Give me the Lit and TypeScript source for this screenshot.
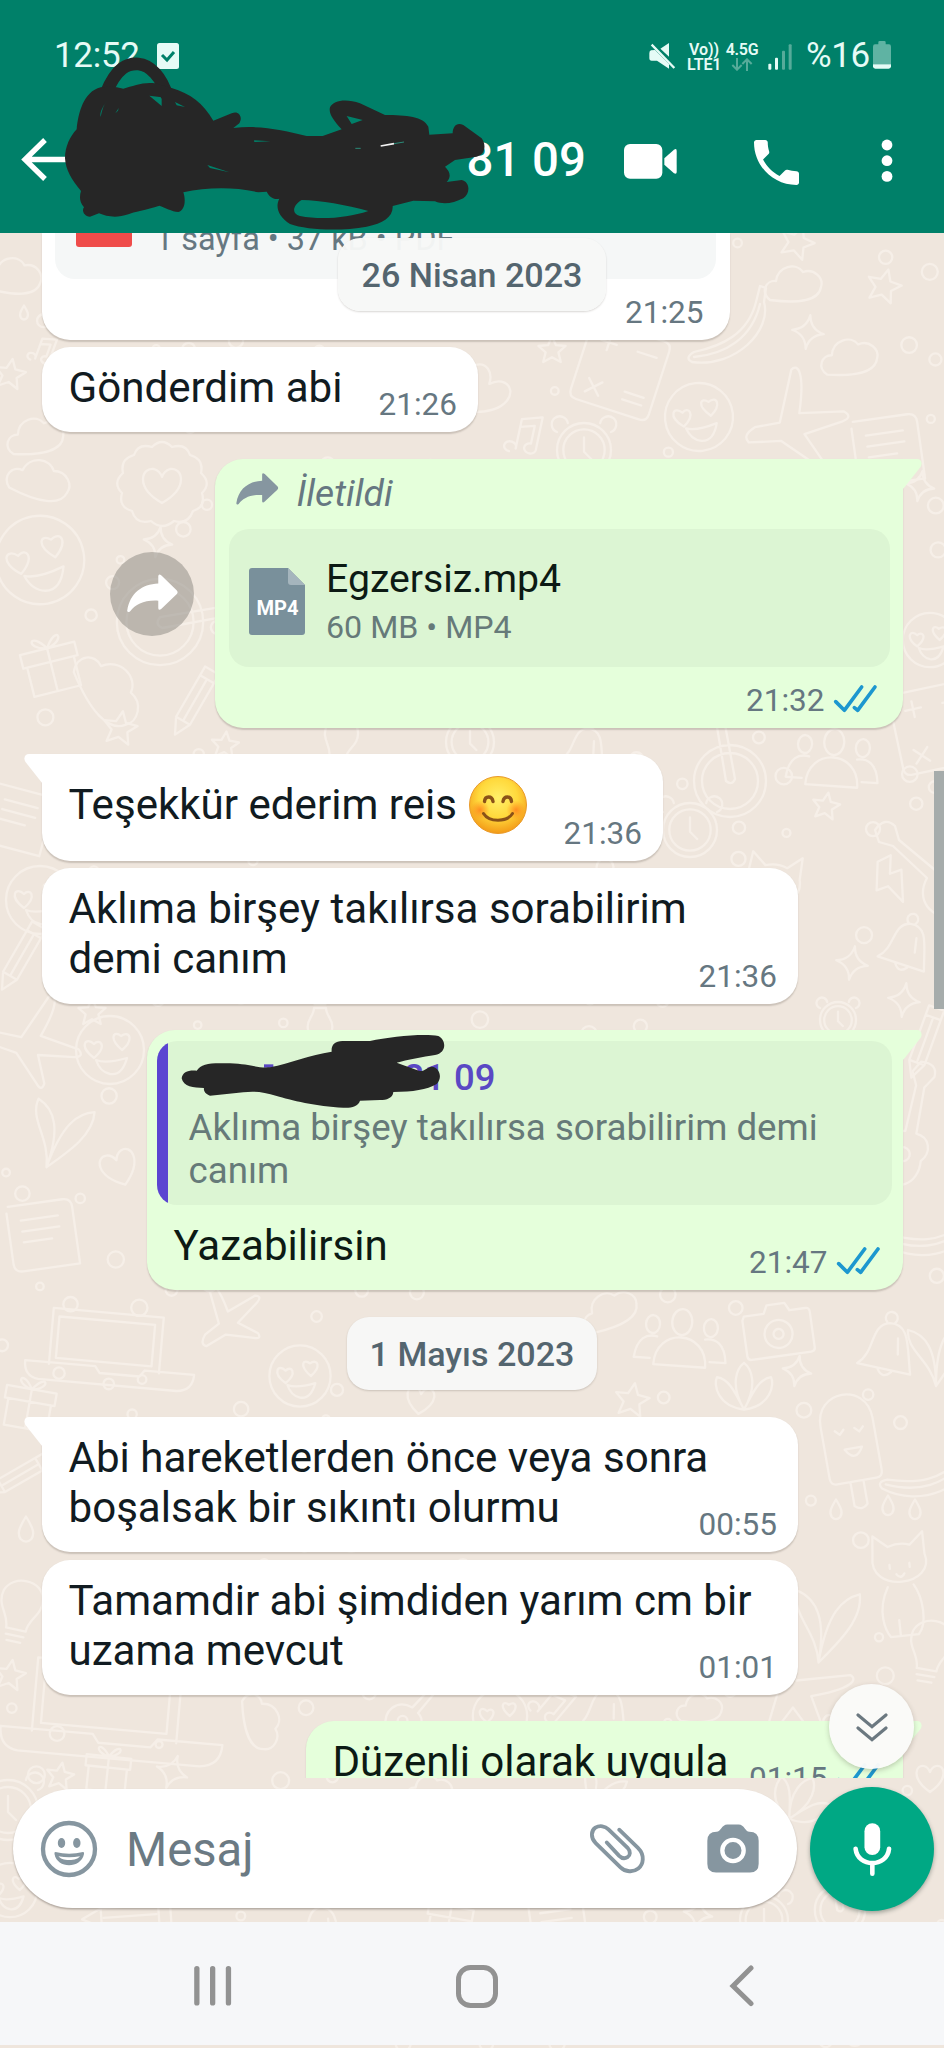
import { LitElement, html, svg, css, nothing } from "lit";
import { customElement, property } from "lit/decorators.js";

/* ---------- wallpaper ---------- */

const DOODLES: Record<string, string> = {
  star: "M0 -17L5 -6L17 -5L8 3L11 15L0 9L-11 15L-8 3L-17 -5L-5 -6Z",
  sparkle: "M0 -17Q2 -3 16 0Q2 3 0 17Q-2 3 -16 0Q-2 -3 0 -17Z",
  cloud: "M-24 16C-34 8 -28 -4 -18 -3C-16 -18 2 -22 9 -12C20 -16 30 -6 27 3C25 16 6 20 -24 16Z",
  heart: "M0 12C-20 -2 -14 -16 -6 -14Q-2 -13 0 -8Q2 -13 6 -14C14 -16 20 -2 0 12Z",
  badge: "M-10 -40Q0 -50 10 -40Q24 -44 28 -32Q42 -28 39 -14Q50 -4 40 6Q44 20 31 24Q26 38 12 34Q0 44 -11 34Q-26 38 -30 24Q-44 20 -40 6Q-50 -4 -39 -14Q-42 -28 -28 -32Q-24 -44 -10 -40ZM0 16C-28 0 -20 -20 -8 -18Q-2 -16 0 -10Q2 -16 8 -18C20 -20 28 0 0 16Z",
  smile: "M34 0A34 34 0 1 1 -34 0A34 34 0 1 1 34 0ZM-14 10Q-4 14 17 8Q12 26 0 24Q-10 22 -14 10ZM-16 8C-32 -4 -24 -14 -16 -6C-10 -12 -2 -4 -16 8ZM12 0C-2 -12 4 -20 11 -14C20 -20 24 -10 12 0Z",
  bell: "M-27 22C-10 8 -20 -18 0 -22C20 -24 20 -2 27 26ZM-3 -23A6 6 0 1 1 5 -23M-6 25Q0 35 8 26M10 -8L12 8",
  camera: "M-32 -18L-12 -18L-8 -26L10 -26L14 -18L30 -18Q34 -18 34 -14V22Q34 26 30 26H-30Q-34 26 -34 22V-14ZM14 4A14 14 0 1 1 -14 4A14 14 0 1 1 14 4ZM5 4A5 5 0 1 1 -5 4A5 5 0 1 1 5 4Z",
  plane: "M-6 -52C0 -60 8 -50 8 -10L52 -18Q62 -14 52 -8L16 10L38 34Q40 44 30 38L-6 20L-38 26Q-46 20 -34 10L-10 2Z",
  banana: "M34 -44L40 -42L38 -28C46 0 10 38 -34 32Q-42 28 -32 22C-4 16 22 4 30 -28ZM-32 27C0 24 26 8 34 -26",
  calc: "M-36 -44L30 -44Q38 -44 38 -36V30Q38 38 30 38H-36Q-44 38 -44 30V-36Q-44 -44 -36 -44ZM-30 -26H-14M-22 -34V-18M8 -26H28M-30 14L-16 28M-16 14L-30 28M8 16H28M8 24H28",
  people: "M-26 26C-26 -12 26 -12 26 26ZM10 -18A10 13 0 1 1 -10 -18A10 13 0 1 1 10 -18ZM-30 20H-46C-44 0 -34 -4 -24 -2M30 20H46C44 0 34 -4 24 -2M-22 -14A7 9 0 1 1 -36 -14A7 9 0 1 1 -22 -14ZM36 -14A7 9 0 1 1 22 -14A7 9 0 1 1 36 -14Z",
  laptop: "M-74 -40H64V30M-66 -30H54V22H-66ZM-74 -40V30M-104 28H-16L-10 36H40L46 28H108Q108 48 88 50H-86Q-104 48 -104 28Z",
  cat: "M-24 -16L-22 -36L-8 -24Q4 -28 14 -24L28 -36L28 -14C38 20 -32 22 -24 -16ZM-12 16C-26 40 -18 60 -14 66H14C24 56 22 30 14 16M-8 -6V-2M12 -6V-2M-2 4Q2 10 6 4M-4 66V50",
  note: "M-12 16A6 5 0 1 1 -6 12V-18L14 -24V8A6 5 0 1 1 8 4V-14L-6 -10",
  bolt: "M-8 -20L6 -24L2 -6L14 -8L10 24L-2 6L-14 8Z",
  flower: "M0 24C-30 20 -34 -4 -30 -12C-18 -10 -12 0 0 24C-16 -4 -8 -22 0 -28C8 -22 16 -4 0 24C12 0 18 -10 30 -12C34 -4 30 20 0 24Z",
  drop: "M0 -15C8 -2 10 4 6 10Q0 16 -6 10C-10 4 -8 -2 0 -15Z",
  bulb: "M-10 20C-10 6 -24 0 -20 -16C-14 -34 16 -34 20 -16C24 0 10 6 10 20ZM-9 26H9M-7 32H7",
  clock: "M30 0A30 30 0 1 1 -30 0A30 30 0 1 1 30 0ZM23 0A23 23 0 1 1 -23 0A23 23 0 1 1 23 0ZM0 -14V2L8 10M-30 -20A9 9 0 1 1 -18 -30M18 -30A9 9 0 1 1 30 -20",
  pencil: "M-8 -34H8V24L0 40L-8 24ZM-8 -24H8M-8 24H8M0 -22V22",
  popsicle: "M-24 30V-18C-24 -52 24 -52 24 -18V30Q24 36 18 36H-18Q-24 36 -24 30ZM-6 36V58Q0 64 6 58V36M-12 -12L-8 -8L-4 -12M6 -12L10 -8L14 -12M-6 6Q2 20 10 6Z",
  gift: "M-28 -12H28V2H-28ZM-24 2V32H24V2M0 -12V32M0 -12C-22 -16 -14 -34 0 -12C14 -34 22 -16 0 -12Z",
  book: "M-30 -30H20Q28 -30 28 -22V30H-24Q-32 30 -32 22V-24M-20 -16H14M-20 -6H14M-20 4H6",
  guitar: "M-50 -30Q-40 -44 -30 -34L-26 -20L10 10C20 0 34 6 36 20C56 34 50 60 30 56C6 60 -10 40 2 18L-32 -14L-46 -18ZM28 32A7 7 0 1 1 14 32A7 7 0 1 1 28 32Z",
  wheel: "M36 0A36 36 0 1 1 -36 0A36 36 0 1 1 36 0ZM28 0A28 28 0 1 1 -28 0A28 28 0 1 1 28 0ZM-4 0L-14 -60L-6 -62L5 -2Q2 5 -4 0Z",
  leaf: "M0 36C-6 10 -30 0 -28 -20C-10 -16 0 0 0 36C0 -6 10 -20 24 -26C30 -6 14 16 0 36Z",
};

type Placed = [kind: string, x: number, y: number, scale: number, turn: number];

const PLACED: Placed[] = [
  ["cloud", 14, 276, 1, 8], ["drop", 24, 313, 0.5, 0], ["star", 10, 374, 0.9, 10], ["note", 42, 352, 0.7, 20],
  ["cloud", 36, 436, 1, -5], ["star", 797, 242, 1, 20], ["cloud", 794, 284, 1, 0], ["star", 884, 286, 1, 15],
  ["banana", 726, 330, 1, 0], ["sparkle", 808, 332, 1, 8], ["cloud", 850, 357, 1, -4], ["calc", 622, 374, 1, 18],
  ["smile", 699, 417, 1, -6], ["plane", 790, 422, 1, 8], ["clock", 584, 450, 0.9, 0], ["note", 524, 438, 1, 12],
  ["heart", 480, 395, 1.8, 40], ["book", 890, 450, 1.1, -8], ["sparkle", 920, 486, 0.9, 10], ["star", 552, 350, 0.8, 0],
  ["badge", 162, 487, 1, 0], ["star", 120, 728, 1, 10], ["sparkle", 158, 542, 0.9, 10], ["wheel", 160, 622, 1.2, 90],
  ["cloud", 40, 480, 1.1, 20], ["smile", 40, 560, 1.3, -10], ["gift", 50, 660, 1, -14], ["cloud", 110, 690, 1.4, 60],
  ["pencil", 195, 700, 1, 30], ["star", 225, 745, 0.8, 6], ["bulb", 340, 742, 0.8, 10], ["clock", 470, 742, 0.8, 0],
  ["bell", 585, 746, 0.8, 10], ["wheel", 730, 781, 1, 0], ["people", 833, 760, 1, 4], ["calc", 940, 730, 1, -12],
  ["smile", 930, 640, 0.8, 0], ["star", 826, 806, 0.8, 10], ["guitar", 925, 860, 1, 0], ["bolt", 889, 880, 1, -10],
  ["bell", 906, 943, 0.9, 14], ["sparkle", 852, 963, 1, 10], ["sparkle", 904, 1000, 1, 8], ["cat", 770, 890, 1, 8],
  ["clock", 690, 830, 0.9, 0], ["book", 20, 820, 1, 15], ["smile", 40, 900, 1, 0], ["pencil", 22, 955, 1, 30],
  ["star", 92, 1012, 0.8, 0], ["plane", 30, 1040, 0.9, 30], ["smile", 110, 1050, 1, 0], ["bulb", 320, 1020, 0.6, 180],
  ["clock", 838, 1020, 0.6, 0], ["book", 45, 1235, 1.1, -8], ["leaf", 60, 1130, 1.1, 20], ["heart", 120, 1170, 1.3, -20],
  ["guitar", 920, 1120, 1, 60], ["pencil", 925, 1040, 1, 20], ["banana", 925, 1230, 1, 30], ["laptop", 110, 1345, 0.8, 5],
  ["people", 681, 1340, 1, 4], ["camera", 778, 1330, 1, -8], ["bell", 887, 1345, 1, 8], ["sparkle", 797, 1371, 0.9, 10],
  ["flower", 744, 1388, 0.9, 0], ["star", 632, 1400, 1, 10], ["smile", 300, 1376, 0.9, 0], ["plane", 225, 1320, 0.7, -20],
  ["leaf", 936, 1350, 1, 0], ["gift", 30, 1400, 0.9, 10], ["cloud", 610, 1310, 1, -20], ["heart", 420, 1402, 1, 8],
  ["popsicle", 850, 1442, 1.1, -10], ["banana", 925, 1470, 1, 20], ["cat", 898, 1570, 1, -6], ["leaf", 826, 1620, 1.2, 10],
  ["drop", 836, 1510, 0.7, 0], ["drop", 888, 1506, 0.7, 0], ["drop", 915, 1510, 0.7, 0], ["drop", 26, 1530, 0.9, 0],
  ["pencil", 20, 1475, 0.9, 60], ["star", 10, 1675, 0.9, 10], ["bulb", 20, 1610, 1, 12], ["laptop", 112, 1706, 1.05, 5],
  ["star", 60, 1776, 0.8, 10], ["gift", 108, 1766, 0.8, 6], ["sparkle", 172, 1772, 1, 20], ["cloud", 262, 1722, 1, 80],
  ["guitar", 425, 1706, 0.7, 90], ["smile", 500, 1716, 0.8, 0], ["note", 550, 1706, 1, 40], ["bell", 604, 1710, 0.9, 8],
  ["cloud", 700, 1708, 0.8, 0], ["plane", 800, 1690, 1, 80], ["bulb", 930, 1650, 1, 10], ["clock", 8, 1810, 1, 0],
  ["cloud", 430, 1790, 0.8, 0], ["leaf", 600, 1790, 0.8, 30], ["flower", 800, 1800, 0.9, 30], ["heart", 930, 1780, 1, 0],
  ["smile", 10, 1890, 0.8, 0], ["pencil", 130, 1916, 1.2, 86], ["bell", 320, 1925, 0.8, 0], ["gift", 450, 1916, 0.8, 10],
  ["book", 560, 1925, 0.9, -8], ["sparkle", 698, 1914, 0.9, 10], ["clock", 764, 1920, 0.8, 0], ["wheel", 840, 1910, 0.7, 0],
];

function sprinkle() {
  let seed = 41;
  const next = () => (seed = (seed * 16807) % 2147483647) / 2147483647;
  const dots: [number, number, number][] = [];
  for (let i = 0; i < 1500 && dots.length < 430; i++) {
    const x = next() * 944, y = 234 + next() * 1814, r = 3.5 + next() * 5;
    const busy =
      PLACED.some(([k, px, py, s]) => Math.hypot(px - x, py - y) < ("star sparkle drop bolt heart".includes(k) ? 25 : 42) * s) ||
      dots.some(([dx, dy]) => Math.hypot(dx - x, dy - y) < 24);
    if (!busy) dots.push([x, y, r]);
  }
  return dots;
}
const DOTS = sprinkle();

@customElement("chat-wallpaper")
class ChatWallpaper extends LitElement {
  static styles = css`
    :host { display: block; }
    svg { display: block; }
  `;
  render() {
    return html`<svg width="944" height="2048" viewBox="0 0 944 2048" fill="none" stroke="#f6efe8"
      stroke-width="2.300" stroke-linejoin="round" stroke-linecap="round">
      ${PLACED.map(([k, x, y, s, a]) => svg`<path vector-effect="non-scaling-stroke" d=${DOODLES[k]} transform="translate(${x} ${y}) rotate(${a}) scale(${s})"/>`)}
      ${DOTS.map(([x, y, r]) => svg`<circle cx=${x} cy=${y} r=${r}/>`)}
    </svg>`;
  }
}

/* ---------- icons ---------- */

const ticks = html`<svg class="ticks" width="45" height="29.3" viewBox="0 0 135 88" fill="none" stroke="#1d97cf"
  stroke-width="11" stroke-linecap="round" stroke-linejoin="round"><path d="M8 53L34 79L86 9M64 71L74 79L126 9"/></svg>`;

const forwardPath = "M438 164C445 120 475 98 516 96V77Q517 70 524 76L562 113Q567 118 562 123L524 159Q517 165 516 158V139C480 137 460 148 445 166Q439 170 438 164Z";

const smiling = html`<svg class="smiling" width="58" height="58" viewBox="0 0 58 58">
  <defs>
    <radialGradient id="face" cx=".5" cy=".38" r=".62">
      <stop offset="0" stop-color="#fff06a"/><stop offset=".55" stop-color="#ffd93c"/><stop offset="1" stop-color="#f39a17"/>
    </radialGradient>
    <radialGradient id="blush"><stop offset="0" stop-color="#ff7d1c" stop-opacity=".8"/><stop offset="1" stop-color="#ff8a1c" stop-opacity="0"/></radialGradient>
  </defs>
  <circle cx="29" cy="29" r="28.5" fill="url(#face)" stroke="#e99a2a" stroke-width="1"/>
  <circle cx="11" cy="34" r="9.5" fill="url(#blush)"/><circle cx="47" cy="34" r="9.5" fill="url(#blush)"/>
  <g fill="none" stroke="#8a5218" stroke-linecap="round">
    <path stroke-width="3.4" d="M15.5 25.5C16 19.5 23 19.5 24 25.5M34 25.5C35 19.5 42 19.5 42.500 25.5"/>
    <path stroke-width="3" d="M14.500 37.500C20 46.500 38 46.500 43.500 37.500"/>
  </g></svg>`;

/* ---------- message bubble ---------- */

@customElement("chat-bubble")
class ChatBubble extends LitElement {
  @property({ reflect: true }) side: "in" | "out" = "in";
  @property() time = "";
  @property({ type: Boolean, reflect: true }) tail = false;
  static styles = css`
    :host { display: flex; flex: none; flex-direction: column; position: relative; box-sizing: border-box;
      border-radius: 28px; background: #fff; color: #111b21; box-shadow: 0 1.5px 1.5px rgba(60, 50, 40, .2); }
    :host([side="in"]) { margin-left: 42px; align-self: flex-start; }
    :host([side="out"]) { margin-right: 41px; align-self: flex-end; background: #e5ffdb; color: #0c1a14; }
    :host([tail][side="in"]) { border-top-left-radius: 0; }
    :host([tail][side="out"]) { border-top-right-radius: 0; }
    .tail { position: absolute; top: 0; }
    .tail.in { left: -18px; }
    .tail.out { right: -18.5px; }
    .row { display: flex; flex: 1; padding: 0 21px 8px 26.5px; }
    .row.out { padding-right: var(--meta-inset, 22px); }
    .text { flex: 1; min-width: 0; padding: 16px 0 11px; font-size: 42.1px; line-height: 50px; white-space: nowrap; }
    .meta { align-self: flex-end; display: flex; align-items: flex-end; gap: 8.5px; font-size: 31.5px; line-height: 38px; color: #667781; }
    .ticks { margin-bottom: 7px; }
  `;
  render() {
    const out = this.side === "out";
    return html`
      ${this.tail
        ? html`<svg class="tail ${this.side}" width="19" height="30" viewBox="0 0 19 30">
            <path fill=${out ? "#e5ffdb" : "#fff"} transform=${out ? "translate(19 0) scale(-1 1)" : ""}
              d="M19 0H5C1 0 -1 4 1.500 8L18.500 29.500H19Z"/></svg>`
        : nothing}
      <slot name="top"></slot>
      <div class="row ${this.side}">
        <div class="text"><slot></slot></div>
        <div class="meta">${this.time}${out ? ticks : nothing}</div>
      </div>`;
  }
}

/* ---------- screen ---------- */

@customElement("app-root")
class AppRoot extends LitElement {
  static styles = css`
    :host { display: flex; flex-direction: column; position: relative; width: 944px; height: 2048px; overflow: hidden;
      background: #efe6dd; font-family: Roboto, "Liberation Sans", sans-serif; }
    svg { display: block; flex: none; }
    chat-wallpaper { position: absolute; left: 0; top: 0; }
    header { position: relative; z-index: 3; height: 233px; flex: none; background: #008069; color: #fff; }
    .scribble { position: absolute; left: 0; top: 0; }
    .status { display: flex; align-items: flex-start; height: 94px; box-sizing: border-box; padding: 35px 53px 0 54px; color: #e6fbf6; }
    .clock { font-size: 35px; line-height: 42px; width: 103px; letter-spacing: -.3px; }
    .status svg.task { margin-top: 8px; }
    .status .mute { margin: 7px 0 0 auto; }
    .net { margin-left: 11px; font-size: 16px; line-height: 15px; font-weight: 600; padding-top: 6.5px; width: 34px; text-align: center; letter-spacing: -.1px; white-space: nowrap; }
    .gen { margin-left: 4px; width: 34px; letter-spacing: -.3px; }
    .gen svg { margin: 1.5px auto 0; }
    .bars { margin: 8px 13px 0 9px; }
    .percent { font-size: 35px; line-height: 42px; width: 63px; white-space: nowrap; letter-spacing: -.4px; }
    .battery { margin: 6px 0 0 4px; }
    .appbar { display: flex; align-items: center; height: 132px; padding: 0 51px 0 20px; }
    .title { flex: 1; padding-left: 400.500px; font-size: 47.3px; font-weight: 500; white-space: nowrap; line-height: 56px; }
    .phone { margin: 4px 82px 0 77px; }
    .video { margin-top: 3px; }
    .dots { margin-top: 1px; }

    main { position: relative; flex: none; height: 1545px; overflow: hidden; display: flex; flex-direction: column; }
    .g7 { margin-top: 7px; } .g8 { margin-top: 8px; } .g26 { margin-top: 26px; } .g27 { margin-top: 27px; }
    .w436 { width: 436px; } .w688 { width: 688px; } .w621 { width: 621px; height: 107px; } .w756 { width: 756px; }
    .w597 { width: 597px; } .b2 { height: 85px; } .b5 { height: 136px; }
    .smiling { display: inline-block; vertical-align: -15px; margin-left: 12px; }
    .smile-line { display: block; height: 61px; line-height: 72px; margin-top: -1px; }

    .first { height: 107px; margin-left: 42px; width: 688px; background: #fff; border-radius: 0 0 28px 28px; box-sizing: border-box;
      box-shadow: 0 1.5px 1.5px rgba(60, 50, 40, .2); padding: 0 20px 0 13px; flex: none; }
    .firstdoc { height: 46px; width: 661px; box-sizing: border-box; background: #f5f7f7; border-radius: 0 0 20px 20px;
      display: flex; align-items: flex-end; padding: 0 0 21px 21px; gap: 23px; }
    .red { width: 56px; height: 14px; background: #ef4c4a; border-radius: 0 0 3px 3px; align-self: flex-start; }
    .sub { font-size: 32.4px; line-height: 38px; color: #667781; white-space: nowrap; }
    .firsttime { text-align: right; font-size: 31.5px; line-height: 38px; color: #667781; margin-top: 15px; padding-right: 6.500px; }

    .date { display: flex; align-items: center; justify-content: center; box-sizing: border-box; height: 73px; width: 250px; align-self: center;
      border-radius: 22px; background: #f7f7f6; color: #54656f; font-weight: 500; font-size: 34.1px; white-space: nowrap;
      box-shadow: 0 1px 2px rgba(60, 50, 40, .2); flex: none; }
    .date.float { position: absolute; left: 338px; top: 5px; width: 268px; background: rgba(247, 248, 247, .96); }

    .out-row { display: flex; flex: none; align-items: center; justify-content: flex-end; }
    .share { width: 84px; height: 84px; border-radius: 50%; background: rgba(148, 145, 138, .56); display: flex; align-items: center; justify-content: center; margin: 0 21px 0 0; }
    .filemsg { height: 269px; --meta-inset: 25px; }
    .fwd { display: flex; gap: 17.500px; padding: 13px 0 0 21px; height: 57px; font-size: 37.2px; line-height: 42px; font-style: italic; color: #667781; }
    .file { margin: 0 13px 0 14px; height: 138px; background: #dcf5d3; border-radius: 20px; display: flex; gap: 21px; box-sizing: border-box; padding: 26px 0 0 20px; }
    .file svg { margin-top: 13px; }
    .name { font-size: 39.2px; line-height: 48px; margin-bottom: 4px; }
    .size { font-size: 32.2px; line-height: 40px; color: #667a79; }

    .replymsg { width: 756px; }
    .quote { margin: 11px 11px 0 10px; height: 164px; box-sizing: border-box; border-radius: 20px; overflow: hidden;
      background: linear-gradient(90deg, #5b45d1 11px, #dcf5d3 11px); padding: 15px 0 0 31.500px; color: #667a79; font-size: 36.700px; line-height: 43px; white-space: nowrap; }
    .author { color: #5a48c4; font-weight: 500; font-size: 36.500px; line-height: 44px; margin-bottom: 6px; padding-left: 215px; }
    .hide-name { position: absolute; left: -17px; top: 0; z-index: 1; }

    .scroll { position: absolute; right: 0; top: 538px; width: 10px; height: 238px; background: #a6acab; }
    .jump { position: absolute; left: 829px; top: 1451px; width: 85px; height: 85px; border-radius: 50%; background: rgba(250, 250, 249, .97); display: flex; align-items: center; justify-content: center; box-shadow: 0 2px 5px rgba(60, 50, 40, .25); }

    .compose { position: relative; flex: none; height: 144px; box-sizing: border-box; padding: 9px 10px 0 13px; display: flex; gap: 13px; align-items: flex-start; }
    .field { margin-top: 2px; width: 784px; height: 119px; box-sizing: border-box; border-radius: 60px; background: #fff; display: flex; align-items: center; padding: 0 37px 0 27px; box-shadow: 0 1.5px 2px rgba(60, 50, 40, .35); }
    .hint { flex: 1; padding: 2px 0 0 28px; font-size: 47.200px; line-height: 56px; color: #6b7a83; }
    .clip { margin-right: 60px; }
    .mic { width: 124px; height: 124px; border-radius: 50%; background: #00a884; display: flex; align-items: center; justify-content: center; box-shadow: 0 2px 4px rgba(40, 60, 50, .4); }
    nav { position: relative; flex: none; height: 123px; background: #f6f7f9; display: flex; align-items: center; padding: 5px 0 0 193px; box-sizing: border-box; }
    nav .home { margin: 0 231px 0 223px; }
  `;

  private header() {
    return html`<header>
      <div class="status">
        <span class="clock">12:52</span>
        <svg class="task" width="22" height="26" viewBox="0 0 22 26"><rect width="22" height="26" rx="2.500" fill="#e6fbf6"/><path d="M5 12L10 17L17 9" fill="none" stroke="#008069" stroke-width="3"/></svg>
        <svg class="mute" width="27" height="28" viewBox="0 0 81 84" fill="#e6fbf6"><path d="M60 3V44L34 20ZM6 25Q1 27 1 34V48Q1 56 8 56H24L60 80V66L18 24Z"/><path d="M8 8L76 78" stroke="#e6fbf6" stroke-width="7" fill="none"/><path d="M14 4L62 52" stroke="#008069" stroke-width="4" fill="none"/></svg>
        <div class="net">Vo))<br />LTE1</div>
        <div class="net gen">4.5G<svg width="22" height="13" viewBox="0 0 66 39" fill="none" stroke="#56ab9a" stroke-width="6"><path d="M18 0V34M4 21L18 35L32 21M48 39V4M34 18L48 4L62 18"/></svg></div>
        <svg class="bars" width="25" height="27" viewBox="0 0 75 81"><g fill="#e6fbf6"><rect x="1" y="62" width="9" height="18" rx="3"/><rect x="21" y="44" width="9" height="36" rx="3"/></g><g fill="#56ab9a"><rect x="42" y="23" width="9" height="57" rx="3"/><rect x="62" y="4" width="9" height="76" rx="3"/></g></svg>
        <span class="percent">%16</span>
        <svg class="battery" width="18" height="28" viewBox="0 0 54 84"><path d="M6 10H16V4Q16 0 20 0H34Q38 0 38 4V10H48Q54 10 54 17V70H0V17Q0 10 6 10Z" fill="#5fb3a3"/><path d="M0 70H54V76Q54 83 47 83H7Q0 83 0 76Z" fill="#e6fbf6"/></svg>
      </div>
      <div class="appbar">
        <svg width="46" height="44" viewBox="0 0 46 44" fill="none" stroke="#fff" stroke-width="5.300"><path d="M25 2L5 21.500L25 41M5 21.500H46"/></svg>
        <div class="title">81 09</div>
        <svg class="video" width="53" height="35" viewBox="0 0 159 105" fill="#fff"><rect width="115" height="104" rx="18"/><path d="M121 43L150 17Q158 12 158 20V84Q158 92 150 88L121 62Z"/></svg>
        <svg class="phone" width="45" height="45" viewBox="3 3 18 18" fill="#fff"><path d="M6.620 10.790c1.440 2.830 3.760 5.140 6.590 6.590l2.200-2.200c.270-.270.670-.360 1.020-.240 1.120.370 2.330.570 3.570.570.550 0 1 .450 1 1V20c0 .550-.450 1-1 1-9.390 0-17-7.610-17-17 0-.550.450-1 1-1h3.500c.550 0 1 .450 1 1 0 1.250.200 2.450.570 3.570.110.350.030.740-.250 1.020l-2.200 2.200z"/></svg>
        <svg class="dots" width="12" height="44" viewBox="0 0 12 44" fill="#fff"><circle cx="6" cy="6" r="5.400"/><circle cx="6" cy="21.700" r="5.400"/><circle cx="6" cy="37.400" r="5.400"/></svg>
      </div>
      <svg class="scribble" width="500" height="233" viewBox="0 0 1500 699">
        <path fill="none" stroke="#262626" stroke-width="38" d="M318 280C350 200 385 190 415 192C450 195 485 230 502 290"/>
        <path fill="#262626" fill-rule="evenodd" d="M195 475C195 440 210 410 230 388C235 340 250 275 302 262C330 258 350 260 370 266C400 258 430 245 465 250L515 264C570 280 610 310 640 362L695 340C715 330 730 350 718 370L700 384C780 375 850 390 920 408L968 408L1025 388C1000 360 985 340 990 322C1000 300 1040 295 1080 310L1155 345C1220 345 1270 350 1285 380L1288 404L1358 400C1358 380 1370 365 1390 375L1445 415C1460 435 1455 465 1430 470L1365 480L1335 500C1350 515 1355 530 1340 546L1385 540C1410 545 1412 580 1390 595C1360 610 1330 615 1305 604L1240 602L1178 618C1180 650 1150 670 1100 680C1020 695 920 690 870 672C835 650 825 620 838 596C820 600 808 590 800 575L775 577C700 560 620 562 550 577C558 600 555 630 535 636C515 635 495 622 478 617C440 630 400 635 385 643C350 655 320 650 297 640L270 650C250 648 245 630 252 622C238 605 238 590 243 573C215 540 197 510 195 475Z
          M905 600C880 615 872 640 900 648C960 660 1040 655 1105 633C1040 615 960 600 905 600ZM1040 348L1088 360L1055 372ZM448 287L485 292V318ZM525 306L555 321L530 316ZM622 495L688 517L630 504ZM762 421L812 424L763 426ZM322 300C308 320 298 340 302 350C306 330 312 312 322 300ZM356 324L346 340L354 332Z"/>
        <path d="M1142 438L1182 431" stroke="#f4f4f4" stroke-width="5"/><path d="M1182 431L1212 426M1066 445H1082" stroke="#2b8a78" stroke-width="3"/>
      </svg>
    </header>`;
  }

  private chat() {
    return html`<main>
      <div class="first">
        <div class="firstdoc"><div class="red"></div><div class="sub">1 sayfa • 37 kB • PDF</div></div>
        <div class="firsttime">21:25</div>
      </div>
      <chat-bubble class="g7 w436 b2" time="21:26">Gönderdim abi</chat-bubble>
      <div class="out-row g27">
        <div class="share"><svg width="53" height="41" viewBox="435 70 133 102" fill="#fff"><path d=${forwardPath}/></svg></div>
        <chat-bubble class="filemsg w688" side="out" tail time="21:32">
          <div slot="top">
            <div class="fwd"><svg width="43" height="34" viewBox="437 70 130 102" fill="#8696a0"><path d=${forwardPath}/></svg>İletildi</div>
            <div class="file">
              <svg width="56" height="67" viewBox="0 0 56 67"><path fill="#79909b" d="M3 0H39L56 17V64Q56 67 53 67H3Q0 67 0 64V3Q0 0 3 0Z"/><path fill="#a5b5bd" d="M39 0L56 17H42Q39 17 39 14Z"/><text x="28.500" y="47" text-anchor="middle" font-size="20.500" font-weight="700" fill="#fff" textLength="42" lengthAdjust="spacingAndGlyphs">MP4</text></svg>
              <div><div class="name">Egzersiz.mp4</div><div class="size">60 MB • MP4</div></div>
            </div>
          </div>
        </chat-bubble>
      </div>
      <chat-bubble class="g26 w621" tail time="21:36"><span class="smile-line">Teşekkür ederim reis${smiling}</span></chat-bubble>
      <chat-bubble class="g7 w756 b5" time="21:36">Aklıma birşey takılırsa sorabilirim<br />demi canım</chat-bubble>
      <chat-bubble class="g26 replymsg" side="out" tail time="21:47">
        <div slot="top">
          <div class="quote"><div class="author">81 09</div>Aklıma birşey takılırsa sorabilirim demi<br />canım</div>
          <svg class="hide-name" width="400" height="110" viewBox="0 0 1200 330">
            <path fill="#5a48c4" d="M402 103H430V113H402Z"/>
            <path fill="#262626" transform="translate(0 -60)" d="M155 205C158 185 175 180 200 182C215 160 240 158 300 160C360 162 380 175 420 172C480 160 540 135 605 125C603 105 615 92 640 93L720 93C780 80 880 70 925 78C950 90 950 130 915 135C880 140 830 150 800 158L860 180C880 190 890 172 905 170C930 172 938 205 920 222C890 240 850 245 790 246C788 265 770 270 750 270L690 272C685 290 660 295 640 293C560 290 480 270 440 258C400 245 370 243 340 247L240 257C225 252 220 240 222 234C190 234 160 230 155 205Z"/>
          </svg>
        </div>
        Yazabilirsin
      </chat-bubble>
      <div class="date g27">1 Mayıs 2023</div>
      <chat-bubble class="g27 w756" tail time="00:55">Abi hareketlerden önce veya sonra<br />boşalsak bir sıkıntı olurmu</chat-bubble>
      <chat-bubble class="g8 w756" time="01:01">Tamamdir abi şimdiden yarım cm bir<br />uzama mevcut</chat-bubble>
      <chat-bubble class="g26 w597" side="out" tail time="01:15">Düzenli olarak uygula</chat-bubble>
      <div class="date float">26 Nisan 2023</div>
      <div class="scroll"></div>
      <div class="jump"><svg width="32" height="30" viewBox="1127 162 96 90" fill="none" stroke="#6b7880" stroke-width="9.500" stroke-linecap="round"><path d="M1133 171L1175 206L1217 171M1133 210L1175 245L1217 210"/></svg></div>
    </main>`;
  }

  private footer() {
    return html`<div class="compose">
        <div class="field">
          <svg width="58" height="58" viewBox="0 0 58 58" fill="#8696a0"><circle cx="29" cy="29" r="26" fill="none" stroke="#8696a0" stroke-width="4.300"/><ellipse cx="21.500" cy="23" rx="3.700" ry="5"/><ellipse cx="36.800" cy="23" rx="3.700" ry="5"/><path d="M15.500 32Q29 35.500 43 32Q44.500 32 44 34C41 49 17 49 14.500 34Q14 32 15.500 32ZM18.500 36.200C20 38.500 24 40 29.200 40S38.500 38.500 40 36.200Q29 38.500 18.500 36.200Z" fill-rule="evenodd"/></svg>
          <div class="hint">Mesaj</div>
          <svg class="clip" width="57" height="52" viewBox="330 490 170 155" fill="none" stroke="#8696a0" stroke-width="11.500" stroke-linecap="round"><path d="M420 510L476 564C498 586 492 614 477 626C462 638 438 636 424 622L350 550C334 534 336 513 349 504C362 496 378 499 388 509L445 564C455 575 453 587 445 592C437 597 427 595 420 588L383 548"/></svg>
          <svg width="54" height="51" viewBox="680 485 162 152"><path fill="#8696a0" d="M712 511C724 511 727 489 744 489H778C795 489 798 511 810 511Q838 511 838 538V607Q838 633 812 633H710Q684 633 684 607V538Q684 511 712 511Z"/><circle cx="761" cy="567" r="32" fill="none" stroke="#fff" stroke-width="13"/></svg>
        </div>
        <div class="mic"><svg width="41" height="55" viewBox="1115 485 125 166" fill="none" stroke="#fff" stroke-width="14" stroke-linecap="round"><rect x="1153" y="488" width="48" height="97" rx="24" fill="#fff" stroke="none"/><path d="M1126 566C1132 624 1222 624 1228 566M1177 612V642"/></svg></div>
      </div>
      <nav>
        <svg width="40" height="42" viewBox="0 0 40 42" fill="#929292"><rect x="1.200" y="1" width="5.300" height="39.500" rx="2.600"/><rect x="17" y="1" width="5.300" height="39.500" rx="2.600"/><rect x="32.800" y="1" width="5.300" height="39.500" rx="2.600"/></svg>
        <svg class="home" width="42" height="43" viewBox="0 0 42 43" fill="none" stroke="#929292" stroke-width="5"><rect x="2.500" y="2.500" width="37" height="38" rx="12"/></svg>
        <svg width="27" height="42" viewBox="0 0 27 42" fill="none" stroke="#929292" stroke-width="5" stroke-linecap="round"><path d="M22 3L4 21L22 38.500"/></svg>
      </nav>`;
  }

  render() {
    return html`<chat-wallpaper></chat-wallpaper>${this.header()}${this.chat()}${this.footer()}`;
  }
}
